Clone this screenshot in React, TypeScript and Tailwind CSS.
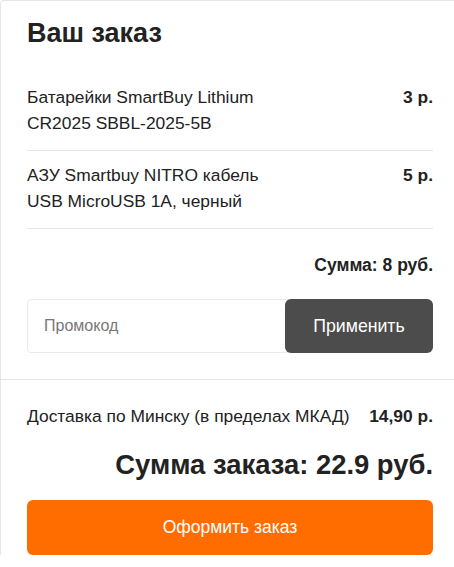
import React from "react";

const items = [
  { name: ["Батарейки SmartBuy Lithium", "CR2025 SBBL-2025-5B"], price: "3 р." },
  { name: ["АЗУ Smartbuy NITRO кабель", "USB MicroUSB 1A, черный"], price: "5 р." },
];

export default function App() {
  return (
    <div
      className="w-[454px] h-[567px] overflow-hidden bg-white text-[#222]"
      style={{ fontFamily: '"Liberation Sans", Arial, sans-serif' }}
    >
      <div className="w-[470px] border-l border-t border-[#e6e6e6] rounded-tl-[4px] bg-white">
        <div className="pl-[26px] pr-[37px]">
          <h1 className="pt-[16px] text-[27px] leading-[32px] font-bold">Ваш заказ</h1>
          <div className="mt-[35px]">
            {items.map((it, i) => (
              <div
                key={i}
                className={`flex justify-between border-b border-[#e6e6e6] pb-[14px] ${i === 0 ? "" : "pt-[11px]"}`}
              >
                <div className="text-[17.4px] leading-[26px]">
                  {it.name[0]}
                  <br />
                  {it.name[1]}
                </div>
                <div className="text-[17.4px] leading-[26px] font-bold">{it.price}</div>
              </div>
            ))}
          </div>
          <div className="pt-[25px] text-right text-[17.5px] leading-[22px] font-bold">Сумма: 8 руб.</div>
          <div className="mt-[23px] flex h-[54px]">
            <div className="flex-1 flex items-center border border-[#ebebeb] rounded-[4px] pl-[16px] text-[16px] text-[#777]">
              Промокод
            </div>
            <div className="-ml-[6px] w-[148px] flex items-center justify-center rounded-[6px] bg-[#4b4c4b] text-white text-[17.7px]">
              Применить
            </div>
          </div>
        </div>
        <div className="mt-[26px] border-t border-[#e6e6e6]" />
        <div className="pl-[26px] pr-[37px]">
          <div className="pt-[25px] flex justify-between items-center text-[17.4px] leading-[22px]">
            <span>Доставка по Минску (в пределах МКАД)</span>
            <span className="font-bold">14,90 р.</span>
          </div>
          <div className="mt-[22px] text-right text-[27.4px] leading-[32px] font-bold">Сумма заказа: 22.9 руб.</div>
          <div className="mt-[19px] h-[55px] flex items-center justify-center rounded-[6px] bg-[#ff6c00] text-white text-[17.5px]">
            Оформить заказ
          </div>
        </div>
      </div>
    </div>
  );
}
